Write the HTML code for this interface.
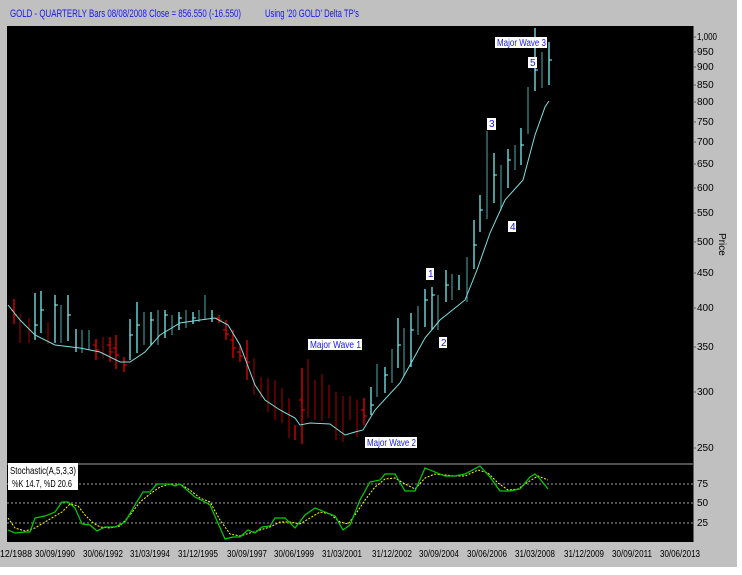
<!DOCTYPE html>
<html><head><meta charset="utf-8"><style>
html,body{margin:0;padding:0;width:742px;height:575px;overflow:hidden;background:#fff}
svg{display:block}
text{font-family:"Liberation Sans",sans-serif}
</style></head><body>
<svg width="742" height="575" viewBox="0 0 742 575">
<rect x="0" y="0" width="737" height="567" fill="#c0c0c0"/>
<rect x="7" y="26" width="686" height="516" fill="#000"/>
<line x1="7" y1="464" x2="693" y2="464" stroke="#a0a0a0" stroke-width="1"/>
<line x1="693.5" y1="26" x2="693.5" y2="542" stroke="#606060"/>
<text x="10" y="17" font-size="11" fill="#1818e8" textLength="231" lengthAdjust="spacingAndGlyphs">GOLD  - QUARTERLY Bars  08/08/2008 Close = 856.550 (-16.550)</text>
<text x="265" y="17" font-size="11" fill="#1818e8" textLength="94" lengthAdjust="spacingAndGlyphs">Using '20 GOLD' Delta TP's</text>
<g font-size="10" fill="#000" lengthAdjust="spacingAndGlyphs">
<text x="697" y="40" textLength="20" lengthAdjust="spacingAndGlyphs">1,000</text><text x="697" y="55">950</text><text x="697" y="70">900</text><text x="697" y="88">850</text><text x="697" y="105">800</text><text x="697" y="125">750</text><text x="697" y="145">700</text><text x="697" y="167">650</text><text x="697" y="191">600</text><text x="697" y="216">550</text><text x="697" y="245">500</text><text x="697" y="276">450</text><text x="697" y="311">400</text><text x="697" y="350">350</text><text x="697" y="395">300</text><text x="697" y="451">250</text>
<text x="697" y="487">75</text><text x="697" y="506">50</text><text x="697" y="526">25</text>
</g>
<g stroke="#606060"><line x1="693" y1="37" x2="696" y2="37"/><line x1="693" y1="52" x2="696" y2="52"/><line x1="693" y1="67" x2="696" y2="67"/><line x1="693" y1="85" x2="696" y2="85"/><line x1="693" y1="102" x2="696" y2="102"/><line x1="693" y1="122" x2="696" y2="122"/><line x1="693" y1="142" x2="696" y2="142"/><line x1="693" y1="164" x2="696" y2="164"/><line x1="693" y1="188" x2="696" y2="188"/><line x1="693" y1="213" x2="696" y2="213"/><line x1="693" y1="242" x2="696" y2="242"/><line x1="693" y1="273" x2="696" y2="273"/><line x1="693" y1="308" x2="696" y2="308"/><line x1="693" y1="347" x2="696" y2="347"/><line x1="693" y1="392" x2="696" y2="392"/><line x1="693" y1="448" x2="696" y2="448"/></g>
<text x="0" y="0" font-size="10" fill="#000" transform="translate(719,233) rotate(90)">Price</text>
<g stroke-width="1.2">
<g stroke="#ff0000"><path d="M14 299V324M96 339V360M110 337V362M116 335V369M124 357V372M219 315V323M226 320V340M233 330V358M240 345V362M247 340V380M295 425V440M302 368V444M364 398V425"/><path stroke-width="1" d="M11 310h3M14 315h3M93 345h3M96 350h3M107 345h3M110 352h3M113 348h3M116 355h3M121 362h3M124 365h3M216 318h3M219 320h3M223 330h3M226 334h3M230 340h3M233 348h3M237 352h3M240 356h3M244 358h3M247 362h3M299 400h3M302 410h3M361 410h3M364 416h3"/></g>
<g stroke="#900000"><path d="M20 314V343M29 318V343M48 322V344M103 337V358M254 358V395M261 377V398M268 378V412M275 380V420M282 388V423M289 398V438M308 359V418M315 380V420M322 374V421M329 385V418M336 392V440M343 396V442M350 396V420M357 400V437"/></g>
<g stroke="#80ffff"><path d="M35 293V340M41 291V333M55 295V343M68 295V341M76 329V352M130 319V360M137 302V353M151 312V345M165 310V338M179 312V330M193 312V324M212 310V322M371 387V415M385 367V393M398 318V368M411 313V367M425 289V327M432 287V330M446 270V302M459 275V290M474 220V269M480 195V232M494 153V203M508 149V188M521 128V165M535 28V91M549 42V85"/><path stroke-width="1" d="M35 325h3M41 310h3M55 305h3M68 315h3M130 335h3M137 325h3M151 320h3M165 315h3M179 318h3M193 318h3M371 405h3M385 375h3M398 345h3M411 330h3M425 300h3M432 295h3M446 285h3M474 245h3M480 210h3M494 175h3M508 160h3M521 145h3M535 70h3M549 60h3"/></g>
<g stroke="#409090"><path d="M61 305V343M82 330V353M89 330V350M144 312V345M158 310V345M172 315V335M186 310V328M199 310V322M205 295V320M377 364V397M392 349V383M404 328V376M418 306V335M438 295V330M452 274V300M467 257V302M487 131V219M501 165V210M515 145V170M528 87V134M542 52V88"/></g>
</g>
<polyline fill="none" stroke="#80e0e0" stroke-width="1" points="8,305 20,320 35,335 55,345 80,348 100,352 120,362 130,362 145,352 160,335 180,323 200,320 215,318 228,325 240,345 255,385 265,400 280,410 295,418 300,425 310,423 330,424 345,435 355,432 363,430 375,410 400,383 425,338 440,320 465,300 477,270 490,233 505,200 523,180 535,135 545,107 549,101"/>
<g font-size="10" fill="#1818e8">
<rect x="308" y="339" width="54" height="11" fill="#fff"/><text x="310" y="348" textLength="51" lengthAdjust="spacingAndGlyphs">Major Wave 1</text>
<rect x="365" y="437" width="52" height="11" fill="#fff"/><text x="367" y="446" textLength="49" lengthAdjust="spacingAndGlyphs">Major Wave 2</text>
<rect x="495" y="37" width="52" height="11" fill="#fff"/><text x="497" y="46" textLength="49" lengthAdjust="spacingAndGlyphs">Major Wave 3</text>
<rect x="528" y="57" width="9" height="11" fill="#fff"/><text x="530" y="66">5</text>
<rect x="487" y="118" width="9" height="12" fill="#fff"/><text x="489" y="127">3</text>
<rect x="426" y="268" width="8" height="12" fill="#fff"/><text x="428" y="277">1</text>
<rect x="439" y="337" width="8" height="11" fill="#fff"/><text x="441" y="346">2</text>
<rect x="508" y="221" width="8" height="11" fill="#fff"/><text x="510" y="230">4</text>
</g>
<g stroke="#a0a0a0" stroke-dasharray="2,2"><line x1="7" y1="484" x2="693" y2="484"/><line x1="7" y1="503" x2="693" y2="503"/><line x1="7" y1="523" x2="693" y2="523"/></g>
<polyline fill="none" stroke="#ffff00" stroke-dasharray="2,1.5" points="8,518 15,528 25,531 35,528 45,522 55,516 62,512 70,504 78,506 85,515 92,522 100,527 110,528 120,526 130,515 140,502 150,494 160,487 170,484 180,484 190,490 200,498 210,502 220,520 230,534 240,536 250,533 260,530 270,527 280,522 290,522 300,524 310,518 320,512 330,514 340,522 348,524 355,515 365,500 375,487 385,479 395,478 405,484 415,489 425,478 435,474 445,475 455,476 465,476 478,470 488,473 498,483 508,490 518,489 528,482 538,476 548,480"/>
<polyline fill="none" stroke="#00d000" stroke-width="1.2" points="8,530 15,533 25,532 30,532 35,518 45,516 55,512 62,502 68,502 75,508 82,524 90,525 97,531 105,527 115,527 125,522 135,505 143,492 150,492 157,484 170,484 175,486 180,484 195,497 205,502 210,505 225,539 233,537 240,537 248,530 255,533 262,527 270,526 275,518 285,518 295,528 305,515 315,508 325,512 335,516 343,530 350,525 360,500 370,482 380,480 385,474 395,474 405,491 415,491 425,468 440,474 445,476 455,476 465,474 480,466 490,477 500,491 510,491 520,489 530,477 535,474 540,479 548,489"/>
<rect x="8" y="463" width="70" height="27" fill="#fff"/>
<text x="10" y="474" font-size="10" fill="#000" textLength="66" lengthAdjust="spacingAndGlyphs">Stochastic(A,5,3,3)</text>
<text x="12" y="487" font-size="10" fill="#000" textLength="60" lengthAdjust="spacingAndGlyphs">%K 14.7, %D 20.6</text>
<g font-size="10" fill="#000" lengthAdjust="spacingAndGlyphs">
<text x="0" y="557" textLength="32" lengthAdjust="spacingAndGlyphs">12/1988</text><text x="35" y="557" textLength="40" lengthAdjust="spacingAndGlyphs">30/09/1990</text><text x="83" y="557" textLength="40" lengthAdjust="spacingAndGlyphs">30/06/1992</text><text x="130" y="557" textLength="40" lengthAdjust="spacingAndGlyphs">31/03/1994</text><text x="178" y="557" textLength="40" lengthAdjust="spacingAndGlyphs">31/12/1995</text><text x="227" y="557" textLength="40" lengthAdjust="spacingAndGlyphs">30/09/1997</text><text x="274" y="557" textLength="40" lengthAdjust="spacingAndGlyphs">30/06/1999</text><text x="322" y="557" textLength="40" lengthAdjust="spacingAndGlyphs">31/03/2001</text><text x="372" y="557" textLength="40" lengthAdjust="spacingAndGlyphs">31/12/2002</text><text x="419" y="557" textLength="40" lengthAdjust="spacingAndGlyphs">30/09/2004</text><text x="467" y="557" textLength="40" lengthAdjust="spacingAndGlyphs">30/06/2006</text><text x="515" y="557" textLength="40" lengthAdjust="spacingAndGlyphs">31/03/2008</text><text x="564" y="557" textLength="40" lengthAdjust="spacingAndGlyphs">31/12/2009</text><text x="612" y="557" textLength="40" lengthAdjust="spacingAndGlyphs">30/09/2011</text><text x="660" y="557" textLength="40" lengthAdjust="spacingAndGlyphs">30/06/2013</text>
</g>
</svg>
</body></html>
